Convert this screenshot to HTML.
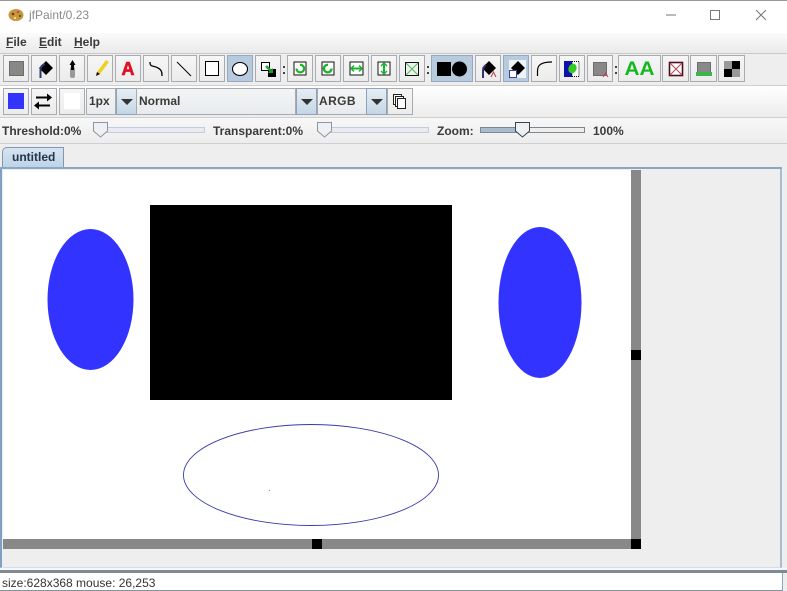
<!DOCTYPE html>
<html><head><meta charset="utf-8">
<style>
html,body{margin:0;padding:0}
body{width:787px;height:591px;overflow:hidden;position:relative;background:#eeeeee;font-family:"Liberation Sans",sans-serif;color:#333}
div{position:absolute;box-sizing:border-box}
.t{font-size:12px;font-weight:bold;color:#3a3a3a;white-space:nowrap;line-height:14px}
.b{top:55px;height:27px;border:1px solid #a8acb0;background:linear-gradient(#f6f6f6,#f1f1f1 50%,#ececec)}
.r2{top:88px;height:27px}
.s{background:#b8cbde;border-color:#94a9bd}
.c{top:88px;height:27px;border:1px solid #a8acb0;background:linear-gradient(#f3f4f5,#e8ebee)}
.a{top:88px;height:27px;width:21px;border:1px solid #8ea3b6;background:linear-gradient(#e6edf3,#c4d6e6)}
.a:after{content:"";position:absolute;left:4px;top:10px;border-left:6px solid transparent;border-right:6px solid transparent;border-top:6px solid #333}
.d{width:2px;height:2px;background:#444}
svg{position:absolute;left:0;top:0}
</style></head><body>
<div style="left:0;top:0;width:787px;height:34px;background:#fff;border-top:1px solid #999"></div>
<div style="left:0;top:33px;width:787px;height:21px;background:linear-gradient(#fbfbfb,#e9e9e9)"></div>
<div style="left:0;top:53px;width:787px;height:1px;background:#c8c8c8"></div>
<div style="left:0;top:85px;width:787px;height:1px;background:#cfcfcf"></div>
<div style="left:0;top:86px;width:787px;height:31px;background:linear-gradient(#fff,#ececec)"></div>
<div style="left:0;top:117px;width:787px;height:1px;background:#cfcfcf"></div>
<div style="left:0;top:118px;width:787px;height:26px;background:linear-gradient(#f7f7f7,#ededed)"></div>
<div style="left:0;top:143px;width:787px;height:1px;background:#cfcfcf"></div>

<div style="left:29px;top:8px;font-size:12px;line-height:14px;color:#8a8a8a;white-space:nowrap">jfPaint/0.23</div>
<div class="t" style="left:6px;top:35px"><u>F</u>ile</div>
<div class="t" style="left:39px;top:35px"><u>E</u>dit</div>
<div class="t" style="left:74px;top:35px"><u>H</u>elp</div>

<div class="b" style="left:3px;width:26px"></div><div class="b" style="left:31px;width:26px"></div><div class="b" style="left:59px;width:26px"></div><div class="b" style="left:87px;width:26px"></div><div class="b" style="left:115px;width:26px"></div><div class="b" style="left:143px;width:26px"></div><div class="b" style="left:171px;width:26px"></div><div class="b" style="left:199px;width:26px"></div><div class="b s" style="left:227px;width:26px"></div><div class="b" style="left:255px;width:26px"></div>
<div class="b" style="left:287px;width:26px"></div><div class="b" style="left:315px;width:26px"></div><div class="b" style="left:343px;width:26px"></div><div class="b" style="left:371px;width:26px"></div><div class="b" style="left:399px;width:26px"></div>
<div class="b s" style="left:431px;width:42px"></div><div class="b" style="left:475px;width:26px"></div><div class="b s" style="left:503px;width:26px"></div><div class="b" style="left:531px;width:26px"></div><div class="b" style="left:559px;width:26px"></div><div class="b" style="left:587px;width:26px"></div>
<div class="b" style="left:618px;width:43px"></div><div class="b" style="left:662px;width:27px"></div><div class="b" style="left:690px;width:27px"></div><div class="b" style="left:718px;width:27px"></div>
<div class="d" style="left:283px;top:66px"></div><div class="d" style="left:283px;top:72px"></div>
<div class="d" style="left:427px;top:66px"></div><div class="d" style="left:427px;top:72px"></div>
<div class="d" style="left:615px;top:66px"></div><div class="d" style="left:615px;top:72px"></div>

<div class="b r2" style="left:3px;width:26px"></div><div class="b r2" style="left:31px;width:26px"></div><div class="b r2" style="left:59px;width:26px"></div>
<div class="c" style="left:86px;width:30px"></div><div class="a" style="left:116px"></div>
<div class="c" style="left:136px;width:160px"></div><div class="a" style="left:296px"></div>
<div class="c" style="left:317px;width:50px"></div><div class="a" style="left:366px"></div>
<div class="b r2" style="left:387px;width:26px"></div>
<div class="t" style="left:89px;top:94px">1px</div>
<div class="t" style="left:139px;top:94px">Normal</div>
<div class="t" style="left:319px;top:94px;letter-spacing:.4px">ARGB</div>

<div class="t" style="left:2px;top:124px">Threshold:0%</div>
<div class="t" style="left:213px;top:124px">Transparent:0%</div>
<div class="t" style="left:437px;top:124px">Zoom:</div>
<div class="t" style="left:593px;top:124px">100%</div>

<div style="left:0;top:144px;width:787px;height:25px;background:#eeeeee"></div>
<div style="left:2px;top:147px;width:62px;height:21px;background:linear-gradient(#d6e4f1,#bdd3e8);border:1px solid #7d98b0;border-bottom:none;border-radius:5px 0 0 0"></div>
<div class="t" style="left:12px;top:150px;color:#26354a">untitled</div>
<div style="left:0;top:167px;width:782px;height:2px;background:#8aa8c4"></div>
<div style="left:0;top:169px;width:782px;height:399px;border-right:2px solid #a6bdd2;border-bottom:1px solid #d2dcea;border-left:2px solid #7f9fc4;background:#eeeeee"></div>
<div style="left:3px;top:170px;width:628px;height:369px;background:#fff"></div>
<div style="left:631px;top:170px;width:10px;height:379px;background:#888"></div>
<div style="left:3px;top:539px;width:638px;height:10px;background:#888"></div>
<div style="left:631px;top:350px;width:10px;height:10px;background:#000"></div>
<div style="left:312px;top:539px;width:10px;height:10px;background:#000"></div>
<div style="left:631px;top:539px;width:10px;height:10px;background:#000"></div>
<div style="left:0;top:568px;width:787px;height:2px;background:#f4f6f8"></div>
<div style="left:0;top:570px;width:787px;height:3px;background:#808a94"></div>
<div style="left:0;top:573px;width:783px;height:18px;background:#fff;border-right:1px solid #8aa6c0;border-bottom:1px solid #8a9098"></div>
<div style="left:2px;top:576px;font-size:12px;line-height:14px;color:#333;white-space:nowrap">size:628x368 mouse: 26,253</div>

<svg width="787" height="591" viewBox="0 0 787 591" fill="none">
<ellipse cx="16" cy="15" rx="7.500" ry="6" fill="#c8963c"/><circle cx="13" cy="14" r="1.300" fill="#6b3a10"/><circle cx="18" cy="12" r="1.200" fill="#d0483a"/><circle cx="20" cy="16" r="1.200" fill="#3a6a30"/><circle cx="15" cy="18" r="1.200" fill="#f0dc90"/>
<path d="M666 15H676" stroke="#777" stroke-width="1"/>
<rect x="710.500" y="10.500" width="9" height="9" stroke="#777"/>
<path d="M756 10L766 20M766 10L756 20" stroke="#777"/>
<rect x="150" y="205" width="302" height="195" fill="#000"/>
<ellipse cx="90.500" cy="299.500" rx="43" ry="70.500" fill="#3333ff"/>
<ellipse cx="540" cy="302.500" rx="41.500" ry="75.500" fill="#3333ff"/>
<ellipse cx="311" cy="475" rx="127.500" ry="50.500" fill="#fff" stroke="#3a3aa8" stroke-width=".9"/>
<rect x="269" y="490" width="1" height="1" fill="#999"/>
<rect x="100.500" y="127.500" width="104" height="5" fill="#e6ecf2" stroke="#c2cdd7"/>
<path d="M93.500 122.500H107.500V131L100.500 137L93.500 131Z" fill="#eef1f4" stroke="#8c959d"/>
<rect x="324.500" y="127.500" width="104" height="5" fill="#e6ecf2" stroke="#c2cdd7"/>
<path d="M317.500 122.500H331.500V131L324.500 137L317.500 131Z" fill="#eef1f4" stroke="#8c959d"/>
<rect x="480.500" y="127.500" width="104" height="5" fill="#eee" stroke="#7d8790"/>
<rect x="481" y="128" width="36" height="4" fill="#a9bccf"/>
<path d="M515.500 122.500H529.500V131L522.500 137L515.500 131Z" fill="#eef1f4" stroke="#3c4248"/>
<rect x="9" y="61" width="15" height="15" fill="#000" opacity=".55"/><rect x="10" y="62" width="13" height="13" fill="#888"/>
<path d="M46 61L53 68L46 75L39 68Z" fill="#000"/><path d="M40.500 78V70Q41 65 45 64" stroke="#333370" stroke-width="2"/>
<rect x="70" y="67" width="5" height="11" rx="2" fill="#999"/><path d="M72.500 60L75.500 65H69.500Z" fill="#000"/><rect x="71" y="64" width="3" height="6" fill="#000"/>
<path d="M97 72L106 60L109 62L100 74Z" fill="#f0d020"/><path d="M97 72L96 76L100 74Z" fill="#000"/>
<text x="128" y="75" font-family="Liberation Sans" font-weight="bold" font-size="18" fill="#e01020" stroke="#e01020" stroke-width=".6" text-anchor="middle">A</text>
<path d="M150 62C150 68 154 65 158 68C162 70 162 73 162 76" stroke="#000" stroke-width="1.300"/>
<path d="M177 62L191 76" stroke="#000"/>
<rect x="205.500" y="61.500" width="13" height="14" fill="#fff" stroke="#000"/>
<ellipse cx="240" cy="69" rx="7.500" ry="6.500" fill="#fff" stroke="#000" stroke-width="1.100"/>
<rect x="261.500" y="62.500" width="8" height="8" fill="#fff" stroke="#000"/><rect x="268" y="69" width="8" height="8" fill="#000"/><path d="M266 66L272 72" stroke="#1aa32a" stroke-width="2.500"/><path d="M273 68V73H268Z" fill="#1aa32a"/>
<rect x="294" y="62" width="12" height="13" fill="#fff" stroke="#111"/><path d="M296.500 68.500A3.800 3.800 0 1 0 300 64.800" stroke="#17b52a" stroke-width="2.200"/>
<rect x="322" y="62" width="12" height="13" fill="#fff" stroke="#111"/><path d="M331.500 68.500A3.800 3.800 0 1 1 328 64.800" stroke="#17b52a" stroke-width="2.400"/>
<rect x="350" y="62" width="13" height="13" fill="#fff" stroke="#111"/><path d="M351 68.500H362" stroke="#1ab52e" stroke-width="2"/><path d="M354 65.500L351 68.500L354 71.500M359 65.500L362 68.500L359 71.500" stroke="#1ab52e" stroke-width="1.500"/>
<rect x="378" y="62" width="12" height="13" fill="#fff" stroke="#111"/><path d="M384 63V74" stroke="#1ab52e" stroke-width="2"/><path d="M381 66L384 63L387 66M381 71L384 74L387 71" stroke="#1ab52e" stroke-width="1.500"/>
<rect x="405.500" y="62.500" width="13" height="13" fill="#eaf2ea" stroke="#111"/><path d="M406 63L418 75M418 63L406 75" stroke="#58b868" stroke-width="1"/>
<rect x="437" y="62" width="14" height="14" fill="#000"/><circle cx="459.500" cy="69" r="7.500" fill="#000"/>
<path d="M489 61L496 68L489 75L482 68Z" fill="#000"/><path d="M483 78V70Q484 66 486 65" stroke="#333370" stroke-width="2"/><path d="M491 77L493.500 72L496 77" stroke="#c04050" stroke-width="1"/>
<rect x="509" y="60" width="17" height="18" fill="#eef3f8"/><path d="M518 61L525 68L518 75L511 68Z" fill="#000"/><rect x="509.500" y="70.500" width="7" height="7" fill="#fff" stroke="#3a3aa8"/>
<path d="M537.500 76V71C537.500 65 541 62 552 62" stroke="#000" stroke-width="1.200"/>
<rect x="564" y="61" width="8" height="16" fill="#1010b0"/><rect x="572" y="61.500" width="7" height="15" fill="#fff" stroke="#000" stroke-dasharray="1 1"/><ellipse cx="572.500" cy="68.500" rx="4" ry="5" fill="#33cc22" transform="rotate(25 572.500 68.500)"/>
<rect x="593" y="62" width="14" height="14" fill="#000" opacity=".55"/><rect x="594" y="63" width="12" height="12" fill="#888"/><path d="M603 77L605.500 73L608 77" stroke="#c04050"/>
<text x="639.500" y="75" font-family="Liberation Sans" font-weight="bold" font-size="19" fill="#12b81e" text-anchor="middle" textLength="30" lengthAdjust="spacingAndGlyphs">AA</text>
<rect x="669.500" y="62.500" width="13" height="13" fill="#fff" stroke="#4a1020" stroke-width="1.600"/><path d="M670 63L682 75M682 63L670 75" stroke="#c04050"/>
<rect x="697" y="62" width="14" height="14" fill="#000" opacity=".55"/><rect x="698" y="63" width="12" height="12" fill="#888"/><rect x="696" y="72" width="16" height="4" fill="#3db54a"/>
<rect x="724" y="61" width="8" height="8" fill="#999"/><rect x="732" y="61" width="8" height="8" fill="#000"/><rect x="724" y="69" width="8" height="8" fill="#000"/><rect x="732" y="69" width="8" height="8" fill="#999"/>
<rect x="8" y="93" width="16" height="16" fill="#3333ff"/>
<path d="M36 97.500H50M36 105.500H50" stroke="#000" stroke-width="2"/><path d="M47 93.500L52 97.500L47 101.500ZM39 101.500L34 105.500L39 109.500Z" fill="#000"/>
<rect x="64" y="93" width="16" height="16" fill="#fff"/>
<rect x="393.500" y="94.500" width="8" height="10" fill="#fff" stroke="#222"/><rect x="395.500" y="96.500" width="8" height="10" fill="#fff" stroke="#222"/><rect x="397.500" y="98.500" width="8" height="10" fill="#fff" stroke="#222"/>
</svg>
</body></html>
